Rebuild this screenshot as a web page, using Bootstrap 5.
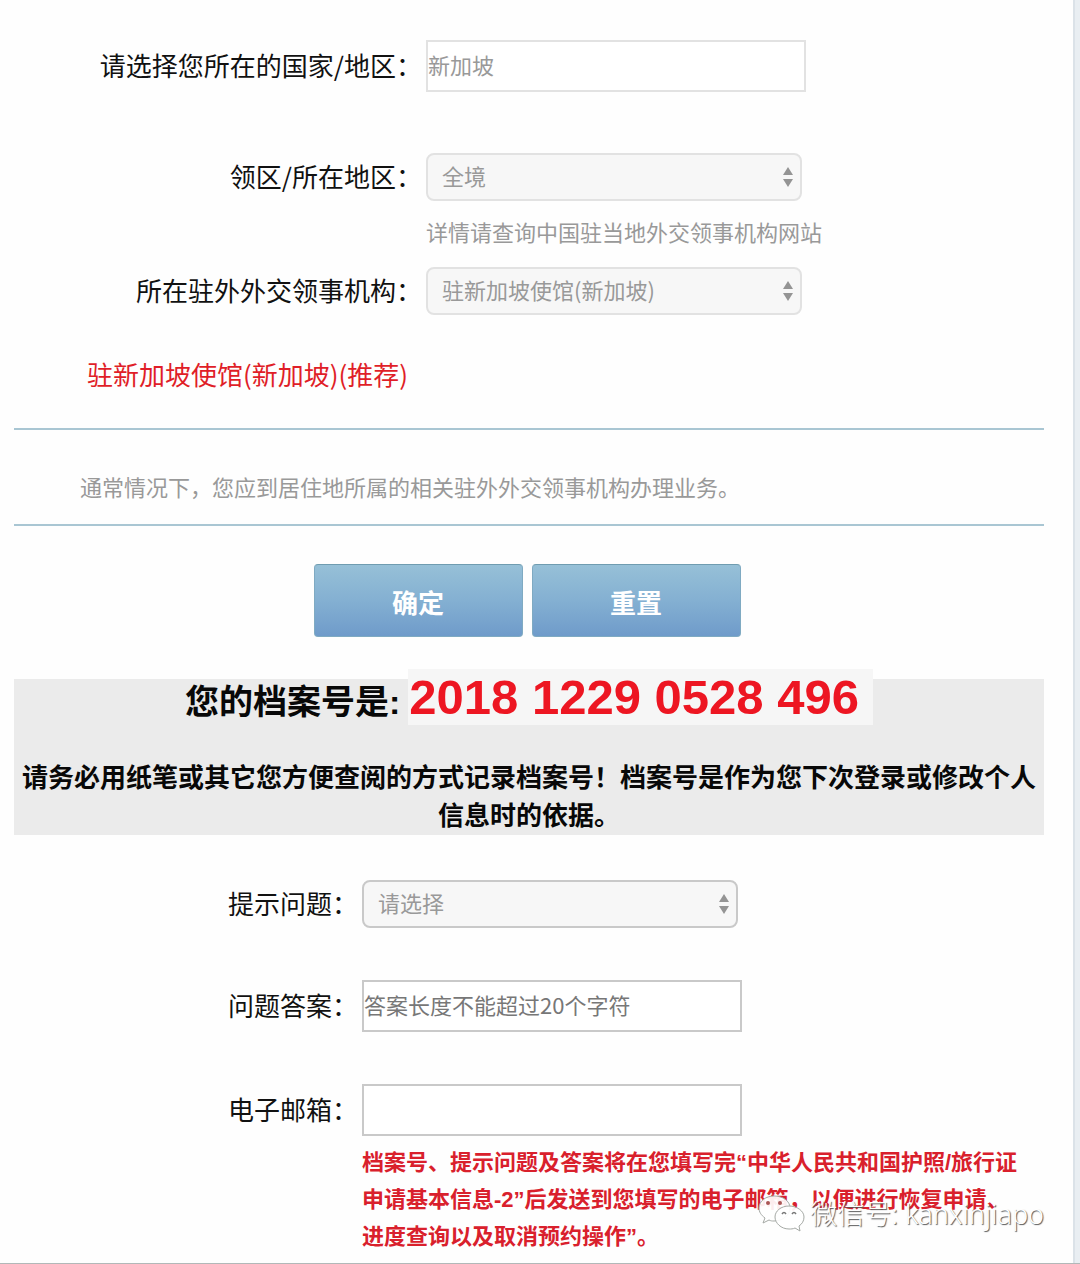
<!DOCTYPE html>
<html lang="zh-CN">
<head>
<meta charset="utf-8">
<meta name="viewport" content="width=device-width, initial-scale=1">
<title>护照/旅行证预约</title>
<link href="https://cdn.jsdelivr.net/npm/bootstrap@5.3.0/dist/css/bootstrap.min.css" rel="stylesheet">
<style>
  body {
    background: #e9eef2;
    color: #111;
    font-family: "Liberation Sans", "Noto Sans CJK SC", sans-serif;
    font-size: 26px;
    line-height: 38px;
  }
  .page-sheet {
    background: #fefefe;
    margin-right: 5px;
    padding: 40px 29px 8px 14px;
    border-right: 2px solid #dbe2e8;
  }
  .page-frame { border-bottom: 1px solid #b2b8b8; }
  .cjk, .field-row, .form-control, .form-select, .hint-line { font-family: "Noto Sans CJK SC", sans-serif; }
  .field-row { display: grid; align-items: center; }
  .region-form .field-row { grid-template-columns: 2fr 3fr; }
  .recovery-form .field-row { grid-template-columns: 1fr 1.96fr; }
  .region-form .district-row { margin-top: 61px; }
  .region-form .hint-row { padding: 11px 0 17px; }
  .field-label { text-align: right; padding: 0 4px 2px 0; white-space: nowrap; }
  .hint-line { font-size: 22px; color: #999; }
  .form-control, .form-control:disabled {
    max-width: 380px; height: 52px; padding: 0 0 4px;
    font-size: 22px; line-height: 38px; color: #999;
    background: #fff; border: 2px solid #e2e2e2; border-radius: 0;
  }
  .form-control::placeholder { color: #777; }
  .form-select, .form-select:disabled {
    max-width: 376px; height: 48px; padding: 0 40px 4px 14px;
    font-size: 22px; line-height: 38px; color: #999;
    border: 2px solid #e2e2e2; border-radius: 8px;
    background: #f7f7f7 url("data:image/svg+xml,%3Csvg xmlns='http://www.w3.org/2000/svg' viewBox='0 0 10 20'%3E%3Cpath fill='%23949494' d='M5 0l5 8H0zM5 20l5-8H0z'/%3E%3C/svg%3E") no-repeat right 7px center / 10px 20px;
  }
  .recovery-form .form-control, .recovery-form .form-select { border-color: #c9c9c9; }
  .recommend { margin: 40px 0 35px; padding-left: 73px; color: #e01e28; }
  .rule-box { border-top: 2px solid #a9c6d3; border-bottom: 2px solid #a9c6d3; padding: 37px 66px 19px; }
  .actions { gap: 9px; margin: 38px 4px 42px 0; }
  .btn-blue {
    width: 209px; height: 73px; padding: 2px 0 0; border-radius: 4px;
    font-size: 26px; font-weight: 700; line-height: 38px; color: #fff;
    border: 1px solid #7faac2; border-top-color: #6f9cb0;
    background: linear-gradient(#96c0d7, #84b0d2 50%, #6f9bca);
  }
  .btn-blue:hover { color: #fff; background: #6f9bca; }
  .record-box { background: #ebebeb; color: #080808; font-weight: 700; }
  .record-title { height: 46px; font-size: 34px; }
  .record-number {
    margin-top: -10px; padding: 0 14px 0 1px;
    font-size: 49px; line-height: 56px; color: #ed1622; background: #f6f6f6;
  }
  .record-tip { padding-top: 34px; }
  .recovery-form { margin-top: 45px; }
  .recovery-form .field-row + .field-row { margin-top: 52px; }
  .recovery-form .field-row + .mail-row { margin-top: 8px; }
  .mail-note {
    padding-right: 16px;
    font-family: "Liberation Sans", "Noto Sans CJK SC", sans-serif;
    font-size: 22px; line-height: 37px; font-weight: 700; color: #d9202c;
  }
  .wechat-mark {
    position: absolute; right: 36px; bottom: 30px;
    font-family: "Noto Sans", "Noto Sans CJK SC", sans-serif;
    font-weight: 300; font-size: 27px; line-height: 38px; color: #fff;
    text-shadow: 1px 1px 1px #555;
  }
</style>
</head>
<body>
<div class="page-frame position-relative">
<main class="page-sheet">
  <form class="region-form">
    <div class="field-row">
      <label class="field-label" for="country">请选择您所在的国家/地区：</label>
      <input class="form-control" id="country" type="text" value="新加坡" disabled>
    </div>
    <div class="field-row district-row">
      <label class="field-label" for="district">领区/所在地区：</label>
      <select class="form-select" id="district" disabled><option>全境</option></select>
    </div>
    <div class="field-row hint-row">
      <div></div>
      <div class="hint-line">详情请查询中国驻当地外交领事机构网站</div>
    </div>
    <div class="field-row">
      <label class="field-label" for="mission">所在驻外外交领事机构：</label>
      <select class="form-select" id="mission" disabled><option>驻新加坡使馆(新加坡)</option></select>
    </div>
    <p class="cjk recommend">驻新加坡使馆(新加坡)(推荐)</p>
    <div class="rule-box hint-line">通常情况下，您应到居住地所属的相关驻外外交领事机构办理业务。</div>
    <div class="d-flex justify-content-center actions">
      <button class="btn btn-blue cjk" type="button">确定</button>
      <button class="btn btn-blue cjk" type="reset">重置</button>
    </div>
  </form>

  <section class="record-box text-center">
    <div class="record-title d-flex justify-content-center align-items-center gap-2">
      <span>您的档案号是:</span>
      <span class="record-number align-self-start">2018 1229 0528 496</span>
    </div>
    <p class="record-tip mb-0">请务必用纸笔或其它您方便查阅的方式记录档案号！档案号是作为您下次登录或修改个人信息时的依据。</p>
  </section>

  <form class="recovery-form">
    <div class="field-row">
      <label class="field-label" for="question">提示问题：</label>
      <select class="form-select" id="question"><option>请选择</option></select>
    </div>
    <div class="field-row">
      <label class="field-label" for="answer">问题答案：</label>
      <input class="form-control" id="answer" type="text" placeholder="答案长度不能超过20个字符">
    </div>
    <div class="field-row">
      <label class="field-label" for="email">电子邮箱：</label>
      <input class="form-control" id="email" type="email">
    </div>
    <div class="field-row mail-row">
      <div></div>
      <div class="mail-note">档案号、提示问题及答案将在您填写完“中华人民共和国护照/旅行证申请基本信息-2”后发送到您填写的电子邮箱，以便进行恢复申请、进度查询以及取消预约操作”。</div>
    </div>
  </form>
</main>
<div class="wechat-mark d-flex align-items-center gap-1">
  <svg width="48" height="38" viewBox="0 0 48 38" aria-hidden="true">
    <g fill="#fff" fill-opacity=".92" stroke="#a5a9a5" stroke-width="1">
      <path d="M16 1C8 1 1 6 1 13c0 4 2 7 6 10l-2 5 6-3c2 1 3 1 5 1 9 0 16-6 16-13S25 1 16 1z"/>
      <path d="M31 11c-8 0-14 5-14 11s6 12 14 12c2 0 4 0 6-1l5 3-1-5c3-2 5-5 5-9 0-6-7-11-15-11z"/>
    </g>
    <g fill="#a55"><circle cx="10" cy="8" r="2"/><circle cx="22" cy="8" r="2"/></g>
    <path d="M24 19q2-3 4 0M34 19q2-3 4 0" fill="none" stroke="#777" stroke-width="1.5"/>
  </svg>
  <span>微信号: kanxinjiapo</span>
</div>
</div>
<script src="https://cdn.jsdelivr.net/npm/bootstrap@5.3.0/dist/js/bootstrap.bundle.min.js"></script>
</body>
</html>
